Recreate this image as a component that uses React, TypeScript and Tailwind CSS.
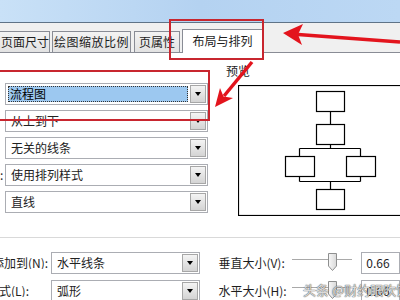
import React from "react";

function DropButton() {
  return (
    <div className="my-[1px] mr-[1px] flex w-[16px] justify-center border border-[#a7a7a7] bg-gradient-to-b from-[#f4f4f4] to-[#d4d4d4] pt-[6px]">
      <div className="h-0 w-0 border-x-[3px] border-t-[4px] border-x-transparent border-t-black" />
    </div>
  );
}

function Combo({ text, selected, width }: { text: string; selected?: boolean; width: string }) {
  return (
    <div className={`flex h-[22px] ${width} border border-[#abadb3] bg-white`}>
      <div className="flex flex-1 items-center px-[2px]">
        {selected ? (
          <span className="flex h-[16px] w-full items-center border border-dotted border-[#333] bg-[#9cc8f0] pl-[1px] text-black">
            {text}
          </span>
        ) : (
          <span className="pl-[3px] text-[#222]">{text}</span>
        )}
      </div>
      <DropButton />
    </div>
  );
}

function Slider() {
  return (
    <div className="relative h-[22px] w-[63px]">
      <div className="absolute left-0 right-0 top-[7px] h-[2px] border-t border-[#a9a9a9] bg-white" />
      <svg className="absolute left-[35px] top-0" width="11" height="20" viewBox="0 0 11 20">
        <defs>
          <linearGradient id="th" x1="0" y1="0" x2="1" y2="0">
            <stop offset="0" stopColor="#f7f7f7" />
            <stop offset="1" stopColor="#d9d9d9" />
          </linearGradient>
        </defs>
        <path d="M1.5 1.5 H9.5 V14 L5.5 18.5 L1.5 14 Z" fill="url(#th)" stroke="#8e8f8f" />
      </svg>
    </div>
  );
}

export default function App() {
  const upper = ["流程图", "从上到下", "无关的线条", "使用排列样式", "直线"];
  return (
    <div className="relative h-[300px] w-[400px] overflow-hidden bg-white font-['Noto_Sans_CJK_SC',sans-serif] text-[12px] leading-none text-[#1e1e1e]">
      {/* window glass */}
      <div className="h-[23px] border-b border-[#5f7387] bg-gradient-to-r from-[#c9e1f7] via-[#b4d2f1] to-[#bcd8f4]" />

      {/* tabs */}
      <div className="flex h-[30px] items-end whitespace-nowrap border-b border-[#898c95] bg-[#f0f0f0]">
        <div className="ml-[-5px] flex h-[21px] w-[55px] items-center justify-center border border-b-0 border-[#898c95] bg-gradient-to-b from-[#f3f3f3] to-[#e2e2e2] pl-[5px]">
          页面尺寸
        </div>
        <div className="ml-[2px] flex h-[21px] w-[79px] items-center justify-center border border-b-0 border-[#898c95] bg-gradient-to-b from-[#f3f3f3] to-[#e2e2e2] tracking-[0.5px]">
          绘图缩放比例
        </div>
        <div className="ml-[3px] flex h-[21px] w-[46px] items-center justify-center border border-b-0 border-[#898c95] bg-gradient-to-b from-[#f3f3f3] to-[#e2e2e2]">
          页属性
        </div>
        <div className="mb-[-1px] ml-[2px] flex h-[24px] w-[81px] items-center justify-center border border-b-0 border-[#898c95] bg-white pb-[1px]">
          布局与排列
        </div>
      </div>

      {/* upper section */}
      <div className="flex h-[184px]">
        <div className="flex flex-col gap-[5px] pt-[30px]">
          {upper.map((t, i) => (
            <div key={t} className="flex items-center">
              <span className="w-[5px]">{i === 3 ? ":" : ""}</span>
              <Combo text={t} selected={i === 0} width="w-[203px]" />
            </div>
          ))}
        </div>
        <div className="ml-[18px] flex flex-col pt-[11px]">
          <span className="leading-[14px]">预览</span>
          <svg className="ml-[12px] mt-[7px]" width="170" height="131" viewBox="0 0 170 131">
            <g fill="none" stroke="#000" strokeWidth="1.2">
              <rect x="0.5" y="0.5" width="175" height="130" />
              <rect x="78.5" y="6.5" width="28" height="20" />
              <rect x="78.5" y="39.5" width="28" height="20" />
              <path d="M92.5 26.5 V39.5 M92.5 59.5 V63.5 M61.5 63.5 H122.5 M61.5 63.5 V71.5 M122.5 63.5 V71.5" />
              <rect x="47.5" y="71.5" width="29" height="20" />
              <rect x="108.5" y="71.5" width="29" height="20" />
              <path d="M61.5 91.5 V96.5 M122.5 91.5 V96.5 M61.5 96.5 H122.5 M92.5 96.5 V104.5" />
              <rect x="78.5" y="104.5" width="28" height="20" />
            </g>
          </svg>
        </div>
      </div>

      {/* lower section */}
      <div className="flex flex-col gap-[6px] border-t border-[#d9d9d9] pt-[14px]">
        <div className="flex items-center">
          <div className="w-[53px] overflow-hidden whitespace-nowrap">
            <span className="ml-[-44px] inline-block">将跳线添加到(N):</span>
          </div>
          <Combo text="水平线条" width="w-[155px]" />
          <span className="ml-[18px] w-[76px]">垂直大小(V):</span>
          <Slider />
          <div className="ml-[9px] flex h-[22px] w-[40px] items-center border border-[#abadb3] pl-[4px]">0.66</div>
        </div>
        <div className="flex items-center">
          <div className="w-[53px] overflow-hidden whitespace-nowrap">
            <span className="ml-[-37px] inline-block">跳线样式(L):</span>
          </div>
          <Combo text="弧形" width="w-[155px]" />
          <span className="ml-[18px] w-[76px]">水平大小(H):</span>
          <Slider />
          <div className="ml-[9px] flex h-[22px] w-[40px] items-center border border-[#abadb3] pl-[4px]">0.66</div>
        </div>
      </div>

      {/* annotations laid over the screenshot */}
      <svg className="pointer-events-none absolute left-0 top-0" width="400" height="300" viewBox="0 0 400 300">
        <rect x="170" y="20" width="93" height="39" fill="none" stroke="#c8262f" strokeWidth="2" />
        <rect x="-2" y="71" width="211" height="49" fill="none" stroke="#c8262f" strokeWidth="2" />
        <path d="M400 42 L298 34.5" stroke="#e3141d" strokeWidth="3.5" />
        <polygon points="283,33 303,24 298,34.5 302,45" fill="#e3141d" />
        <path d="M252 62 L224 96" stroke="#e3141d" strokeWidth="3.5" />
        <polygon points="215,107 220,88 223.5,96.5 233,98" fill="#e3141d" />
      </svg>

      <div className="pointer-events-none absolute left-[303px] top-[283px] whitespace-nowrap text-[13px] text-white/80 [text-shadow:0_0_1px_#444,0_0_1px_#444]">
        头条 @财约眼吹饭
      </div>
    </div>
  );
}
